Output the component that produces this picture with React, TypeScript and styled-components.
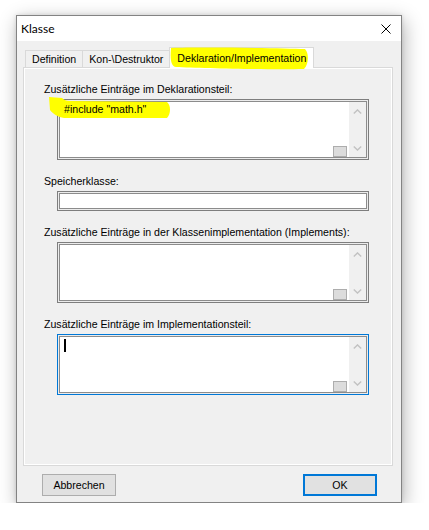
import React from "react";
import styled, { createGlobalStyle } from "styled-components";

const GlobalStyle = createGlobalStyle`
  html, body {
    margin: 0;
    padding: 0;
    background: #ffffff;
  }
  body {
    font-family: "Liberation Sans", Arial, sans-serif;
    font-size: 10.6px;
    color: #000;
  }
`;

const Page = styled.div`
  padding: 15px 0 0 16px;
`;

const Window = styled.div`
  position: relative;
  box-sizing: border-box;
  width: 386px;
  height: 488px;
  border: 1px solid #838383;
  background: #f0f0f0;
  display: flex;
  flex-direction: column;
  box-shadow: 2px 5px 18px rgba(0, 0, 0, 0.3), 0 0 4px rgba(0, 0, 0, 0.12);
`;

const TitleBar = styled.div`
  height: 25px;
  flex: none;
  background: #ffffff;
  display: flex;
  align-items: center;
  justify-content: space-between;
  padding: 0 10px 0 4px;
`;

const Title = styled.span`
  font-family: Lato, "Noto Sans", sans-serif;
  font-size: 12px;
  color: #000;
`;

const Body = styled.div`
  flex: 1;
  display: flex;
  flex-direction: column;
  padding: 6px 8px 6px 6px;
  min-height: 0;
`;

const TabStrip = styled.div`
  position: relative;
  display: flex;
  align-items: flex-end;
  height: 20px;
  padding-left: 2px;
  flex: none;
`;

const Tab = styled.div<{ $active?: boolean }>`
  box-sizing: border-box;
  height: ${(p) => (p.$active ? "21px" : "17px")};
  margin-bottom: ${(p) => (p.$active ? "-1px" : "0")};
  padding: 0 ${(p) => (p.$active ? "7px" : "6px")};
  border: 1px solid #d9d9d9;
  border-bottom: none;
  margin-right: -1px;
  background: ${(p) => (p.$active ? "#ffffff" : "#f0f0f0")};
  display: flex;
  align-items: center;
  white-space: nowrap;
  line-height: 13px;
`;

const TabLabel = styled.span`
  position: relative;
  z-index: 2;
`;

const Panel = styled.div`
  flex: 1;
  border: 1px solid #d9d9d9;
  box-shadow: inset 0 0 0 1px #ffffff;
  background: #f0f0f0;
  padding: 15px 0 0 20px;
  display: flex;
  flex-direction: column;
  gap: 15px;
`;

const Field = styled.div`
  display: flex;
  flex-direction: column;
  gap: 3px;
`;

const Label = styled.div`
  line-height: 13px;
  height: 13px;
  white-space: nowrap;
`;

const EditFrame = styled.div<{ $height: number; $focused?: boolean }>`
  box-sizing: border-box;
  margin-left: 13px;
  width: 312px;
  height: ${(p) => p.$height}px;
  border: 1px solid ${(p) => (p.$focused ? "#0078d7" : "#7e7e7e")};
  box-shadow: inset 0 0 0 1px #ececec, inset 0 0 0 2px #8c8c8c;
  padding: 2px;
  background: #ffffff;
  display: flex;
`;

const MemoText = styled.div`
  position: relative;
  flex: 1;
  display: flex;
  flex-direction: column;
  justify-content: space-between;
  padding: 1px 0 0 4px;
`;

const TextLine = styled.span`
  position: relative;
  z-index: 2;
  line-height: 13px;
  white-space: nowrap;
`;

const Caret = styled.span`
  display: block;
  width: 2px;
  height: 13px;
  margin-top: 1px;
  background: #000;
`;

const SizeGrip = styled.span`
  box-sizing: border-box;
  align-self: flex-end;
  width: 14px;
  height: 11px;
  margin-right: 2px;
  border: 1px solid #adadad;
  background: #dcdcdc;
`;

const ScrollTrack = styled.div`
  width: 17px;
  flex: none;
  background: #f0f0f0;
  display: flex;
  flex-direction: column;
  justify-content: space-between;
  align-items: center;
  padding: 7px 0 6px;
  box-sizing: border-box;
`;

const Footer = styled.div`
  flex: none;
  margin-top: 8px;
  height: 22px;
  display: flex;
  justify-content: space-between;
  padding: 0 16px 0 19px;
`;

const Button = styled.button<{ $default?: boolean }>`
  box-sizing: border-box;
  width: 74px;
  height: 22px;
  padding: 0;
  font-family: "Liberation Sans", Arial, sans-serif;
  font-size: 10.6px;
  color: #000;
  background: #e1e1e1;
  border: 1px solid ${(p) => (p.$default ? "#0078d7" : "#adadad")};
  box-shadow: ${(p) => (p.$default ? "inset 0 0 0 1px #0078d7" : "none")};
  border-radius: 0;
`;

const Marker = styled.svg`
  position: absolute;
  left: 0;
  top: 0;
  width: 384px;
  height: 486px;
  z-index: 1;
  pointer-events: none;
`;

const Chevron = ({ up }: { up?: boolean }) => (
  <svg width="9" height="5" viewBox="0 0 9 5">
    <polyline
      points={up ? "0.8,4.4 4.5,0.9 8.2,4.4" : "0.8,0.6 4.5,4.1 8.2,0.6"}
      fill="none"
      stroke="#c2c2c2"
      strokeWidth="1.4"
    />
  </svg>
);

const CloseGlyph = () => (
  <svg width="10" height="10" viewBox="0 0 10 10">
    <path d="M0.5 0.5 L9.5 9.5 M9.5 0.5 L0.5 9.5" stroke="#000" strokeWidth="1" />
  </svg>
);

const Memo = ({ text, focused }: { text?: string; focused?: boolean }) => (
  <EditFrame $height={61} $focused={focused}>
    <MemoText>
      {focused ? <Caret /> : <TextLine>{text ?? ""}</TextLine>}
      <SizeGrip />
    </MemoText>
    <ScrollTrack>
      <Chevron up />
      <Chevron />
    </ScrollTrack>
  </EditFrame>
);

export default function App() {
  return (
    <>
      <GlobalStyle />
      <Page>
        <Window>
          <TitleBar>
            <Title>Klasse</Title>
            <CloseGlyph />
          </TitleBar>
          <Body>
            <TabStrip>
              <Tab>Definition</Tab>
              <Tab>Kon-\Destruktor</Tab>
              <Tab $active>
                <TabLabel>Deklaration/Implementation</TabLabel>
              </Tab>
            </TabStrip>
            <Panel>
              <Field>
                <Label>Zusätzliche Einträge im Deklarationsteil:</Label>
                <Memo text={'#include "math.h"'} />
              </Field>
              <Field>
                <Label>Speicherklasse:</Label>
                <EditFrame $height={20} />
              </Field>
              <Field>
                <Label>Zusätzliche Einträge in der Klassenimplementation (Implements):</Label>
                <Memo />
              </Field>
              <Field>
                <Label>Zusätzliche Einträge im Implementationsteil:</Label>
                <Memo focused />
              </Field>
            </Panel>
            <Footer>
              <Button>Abbrechen</Button>
              <Button $default>OK</Button>
            </Footer>
          </Body>
          {/* highlighter strokes over the active tab and the first memo line */}
          <Marker viewBox="17 16 384 486">
            <path
              d="M171,48 C200,47 280,48 305,49 C309,53 309,64 304,69 C270,70 200,68 176,67 C171,66 170,60 171,48 Z"
              fill="#ffff00"
            />
            <path
              d="M49,97 L62,98 C64,100 66,101 70,101 L167,102 C171,105 171,114 167,118 L64,118 C58,117 53,114 50,110 Z"
              fill="#ffff00"
            />
          </Marker>
        </Window>
      </Page>
    </>
  );
}
